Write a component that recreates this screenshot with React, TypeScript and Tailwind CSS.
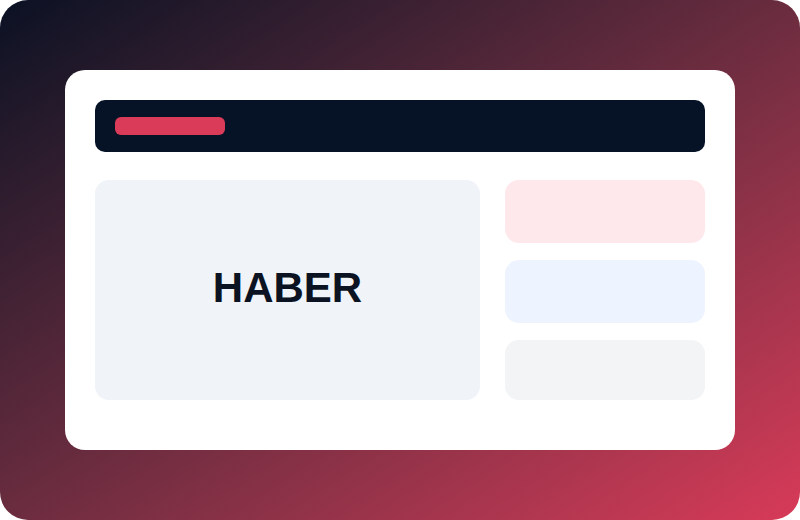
export default function App() {
  return (
    <div className="w-[800px] h-[520px] bg-white">
      <div className="w-full h-full rounded-[28px] bg-linear-to-br from-[#0a1123] to-[#d83a58] flex items-center justify-center">
        <div className="w-[670px] h-[380px] bg-white rounded-[20px] p-[30px] flex flex-col gap-[28px]">
          <div className="h-[52px] rounded-[10px] bg-[#061226] flex items-center px-[20px]">
            <div className="w-[110px] h-[18px] rounded-[6px] bg-[#d93b58]" />
          </div>
          <div className="flex gap-[25px]">
            <div className="w-[385px] h-[220px] rounded-[14px] bg-[#f0f3f8] flex items-center justify-center pb-[4px]">
              <span
                className="text-[42px] font-bold text-[#0b1222] leading-none"
                style={{ fontFamily: '"Liberation Sans", Arial, sans-serif' }}
              >
                HABER
              </span>
            </div>
            <div className="flex-1 flex flex-col gap-[17px]">
              <div className="h-[63px] rounded-[14px] bg-[#ffe8eb]" />
              <div className="h-[63px] rounded-[14px] bg-[#eef4ff]" />
              <div className="h-[60px] rounded-[14px] bg-[#f3f4f6]" />
            </div>
          </div>
        </div>
      </div>
    </div>
  );
}
